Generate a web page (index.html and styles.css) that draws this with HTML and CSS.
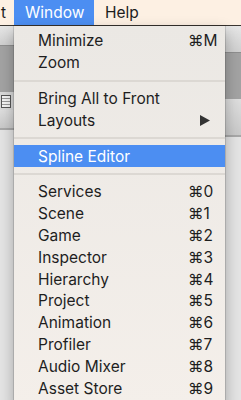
FILE: index.html
```
<!DOCTYPE html>
<html lang="en">

<head>
    <meta charset="UTF-8">
    <title>Window menu</title>
    <link rel="stylesheet" href="styles.css">
</head>

<body>

    <header class="menubar">
        <span class="mb-item mb-cut">t</span>
        <span class="mb-item active">Window</span>
        <span class="mb-item">Help</span>
    </header>

    <!-- editor window behind the menu -->
    <div class="app">
        <div class="pane">
            <div class="band top-grad"></div>
            <div class="band dark left-dark"></div>
            <div class="band tool">
                <span class="doc-icon"></span>
            </div>
            <div class="band tab-grad"></div>
            <div class="band body"></div>
        </div>
        <div class="pane"></div>
        <div class="pane">
            <div class="band top-grad right-top"></div>
            <div class="band dark right-dark"></div>
            <div class="band tab-grad right-tab"></div>
            <div class="band body"></div>
        </div>
    </div>

    <div class="menu">
        <div class="item"><span>Minimize</span><span class="key">&#8984;M</span></div>
        <div class="item"><span>Zoom</span></div>
        <div class="sep"></div>
        <div class="item"><span>Bring All to Front</span></div>
        <div class="item">
            <span>Layouts</span>
            <span class="key">
                <svg class="arrow" width="10" height="11" viewBox="0 0 10 11"><polygon points="0,0 10,5.5 0,11" fill="#333"/></svg>
            </span>
        </div>
        <div class="sep"></div>
        <div class="item selected"><span>Spline Editor</span></div>
        <div class="sep"></div>
        <div class="item"><span>Services</span><span class="key">&#8984;0</span></div>
        <div class="item"><span>Scene</span><span class="key">&#8984;1</span></div>
        <div class="item"><span>Game</span><span class="key">&#8984;2</span></div>
        <div class="item"><span>Inspector</span><span class="key">&#8984;3</span></div>
        <div class="item"><span>Hierarchy</span><span class="key">&#8984;4</span></div>
        <div class="item"><span>Project</span><span class="key">&#8984;5</span></div>
        <div class="item"><span>Animation</span><span class="key">&#8984;6</span></div>
        <div class="item"><span>Profiler</span><span class="key">&#8984;7</span></div>
        <div class="item"><span>Audio Mixer</span><span class="key">&#8984;8</span></div>
        <div class="item"><span>Asset Store</span><span class="key">&#8984;9</span></div>
    </div>

</body>

</html>
```

FILE: styles.css
```
/* General Styles */

body {
    font-family: Inter, "Liberation Sans", "DejaVu Sans", sans-serif;
    font-size: 14px;
    color: #222;
    margin: 0;
    padding: 0;
    width: 241px;
    height: 400px;
    overflow: hidden;
    position: relative;
    background-color: #e6e6e6;
}

/* Top menu bar */

.menubar {
    display: flex;
    height: 25px;
    background-color: #fdf0e3;
    border-bottom: 1px solid #3b3631;
}

.mb-item {
    display: flex;
    align-items: center;
    padding: 0 11px;
    color: #1c1c1c;
    font-size: 15.5px;
}

.mb-cut {
    justify-content: flex-end;
    box-sizing: border-box;
    overflow: hidden;
    margin-left: -8px;
    width: 22px;
    padding: 0 8px 0 0;
}

.mb-item.active {
    width: 80px;
    box-sizing: border-box;
    background-color: #4c8ef2;
    color: #fff;
}

/* Window behind */

.app {
    display: grid;
    grid-template-columns: 14px 1fr 16px;
    height: 374px;
}

.pane {
    display: flex;
    flex-direction: column;
}

.band {
    flex: none;
}

.top-grad {
    height: 19px;
    background: linear-gradient(#e6e6e6, #d0d0d0);
}

.right-top {
    height: 26px;
}

.dark {
    height: 46px;
    background-color: #a3a3a3;
    border-top: 1px solid #8f8f8f;
}

.right-dark {
    height: 46px;
}

.tool {
    height: 18px;
    background-color: #d9d9d9;
    display: flex;
    align-items: center;
}

.doc-icon {
    display: block;
    width: 8px;
    height: 11px;
    margin-left: 1px;
    border: 1px solid #555;
    background: repeating-linear-gradient(#f4f4f4 0 2px, #999 2px 3px);
}

.tab-grad {
    height: 18px;
    background: linear-gradient(#dedede, #c9c9c9);
    border-bottom: 2px solid #a8a8a8;
}

.right-tab {
    height: 36px;
}

.body {
    flex: 1;
    background-color: #e4e4e4;
}

/* Dropdown menu */

.menu {
    position: absolute;
    top: 26px;
    left: 14px;
    width: 211px;
    height: 380px;
    padding-top: 4px;
    box-sizing: border-box;
    background: linear-gradient(#ebe8e4, #f4efea);
    box-shadow: 0 0 0 1px rgba(0, 0, 0, 0.12), 0 6px 14px rgba(0, 0, 0, 0.3);
}

.item {
    display: grid;
    grid-template-columns: 1fr 37px;
    align-items: center;
    height: 21.8px;
    padding-left: 24px;
    font-size: 15.5px;
    color: #1e1e1e;
}

.item.selected {
    background-color: #4c8ef2;
    color: #fff;
}

.key {
    display: flex;
    align-items: center;
}

.arrow {
    margin-left: 12px;
}

.sep {
    height: 14px;
    display: flex;
    align-items: center;
}

.sep::before {
    content: "";
    flex: 1;
    height: 2px;
    background-color: #dcd8d3;
}
```
